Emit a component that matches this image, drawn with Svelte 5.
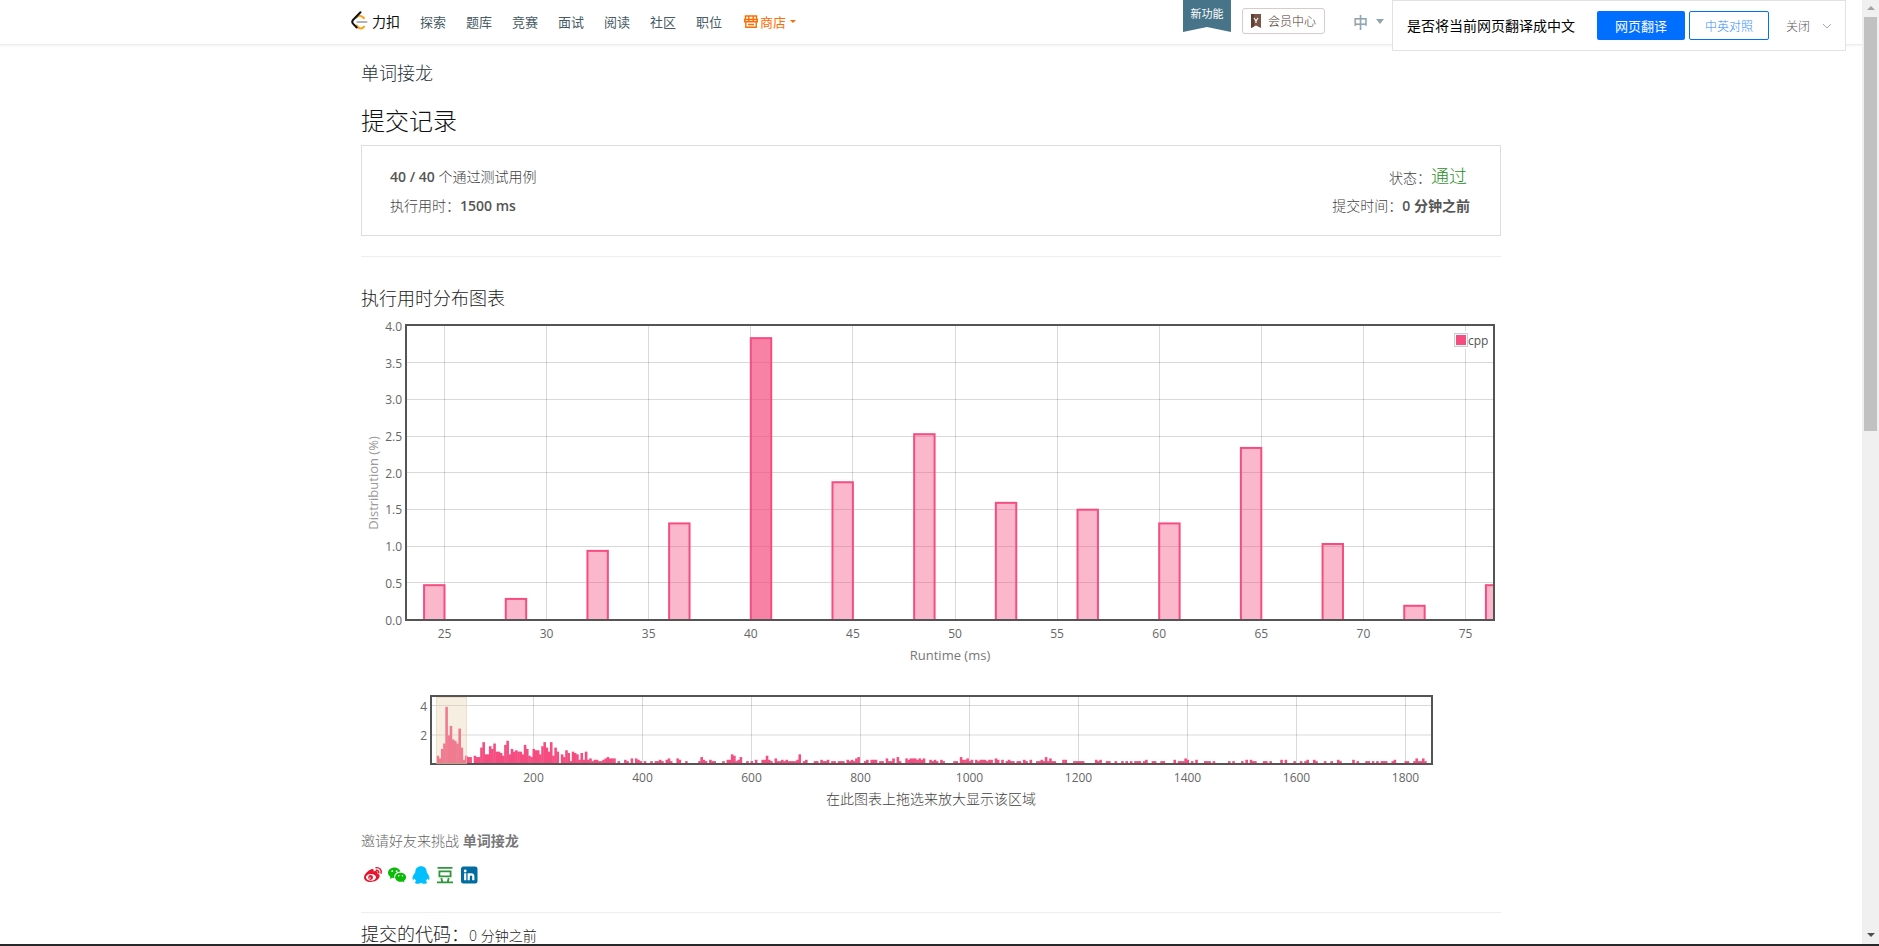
<script lang="ts">
	type Bar = {
		runtime: number;
		count: number;
	}

	// share of all submissions that one submission stands for, in percent
	const PERCENT = 0.0935;

	const navItems = ['探索', '题库', '竞赛', '面试', '阅读', '社区', '职位'];

	// one value per 4 ms bucket, starting at 24 ms
	const fast = [5, 3, 10, 14, 41, 20, 27, 17, 16, 14, 25, 11, 2, 5];

	// base 36 digit per 4 ms bucket, starting at 80 ms
	const slow =
		'440544bf66cae8875dg6a89886da54' +
		'a996cfb8f5b80649718762728231221123433301' + '0021030321' +
		'01001011210231003200100000142102110001022651240010' +
		'10200225210311212111126012000110211201101110212134' +
		'00120222011031130410032333232300212102100001104223' +
		'12021222122032020121101102102001121413110002200011' +
		'11100000212001100100101010111012001100110000201113' +
		'20102000111010000001010001020211000110100002020001' +
		'00101200210001001002100000201000110101011100120000' +
		'1100131131';

	const bars: Bar[] = [
		...fast.map((count, i) => ({ runtime: 24 + i * 4, count })),
		...[...slow].map((c, i) => ({ runtime: 80 + i * 4, count: parseInt(c, 36) }))
	].filter(bar => bar.count > 0);

	const mainBars = bars.slice(0, fast.length);
	const ownRuntime = 40;

	const mainXTicks = [25, 30, 35, 40, 45, 50, 55, 60, 65, 70, 75];
	const mainYTicks = [0, 0.5, 1, 1.5, 2, 2.5, 3, 3.5, 4];
	const miniXTicks = [200, 400, 600, 800, 1000, 1200, 1400, 1600, 1800];
	const miniYTicks = [2, 4];

	const mainX = (v: number) => 83.5 + (v - 25) * 20.42;
	const mainY = (v: number) => 309.5 - v * 73.4;
	const miniX = (v: number) => 172.5 + (v - 200) * 0.545;
	const miniY = (v: number) => 79.5 - v * 14.5;
</script>

<div class="window">
	<div class="page">
		<header>
			<div class="header-inner">
				<a class="logo" href="#home">
					<svg width="17" height="20" viewBox="0 0 17 20" fill="none" stroke-linecap="round" stroke-width="2">
						<path d="M5.500 14.500l2 2c1.300 1.300 3.400 1.300 4.700 0l.8-.8" stroke="#ffa116" />
						<path d="M5.500 6.500c2-2 4.600-1.800 6-.6l1.500 1.200" stroke="#ffa116" />
						<path d="M6.500 11h9" stroke="#b3b3b3" />
						<path d="M9.500 1.200L2.200 8.700c-1.100 1.200-1.100 3 0 4.200l3.500 3.600" stroke="#111" />
					</svg>
					<span>力扣</span>
				</a>
				<nav>
					{#each navItems as item}
						<a href="#{item}">{item}</a>
					{/each}
					<a class="store" href="#store">
						<svg width="14" height="13" viewBox="0 0 14 13" fill="none" stroke="#ff6d00" stroke-width="1.400">
							<path d="M1.500 1h11v3.500h-11zM.7 4.500h12.600v2.200H.7zM4.800 1v5M9.200 1v5M1.800 7v5.200h10.400V7M4 9.500h6" />
						</svg>
						<span>商店</span>
						<i class="caret"></i>
					</a>
				</nav>
				<div class="header-right">
					<span class="ribbon">新功能</span>
					<button class="member">
						<svg width="10" height="14" viewBox="0 0 10 14">
							<path d="M0 0h10v14L5 11.500 0 14z" fill="#795548" />
							<path d="M0 0h3v12.500L0 14z" fill="#5d4037" />
							<path d="M3 4l2 3 2-3M5 7v2" fill="none" stroke="#fff" stroke-width="1.200" />
						</svg>
						会员中心
					</button>
					<button class="lang">中<i class="caret"></i></button>
				</div>
			</div>
		</header>

		<div class="translate">
			<span class="question">是否将当前网页翻译成中文</span>
			<button class="primary">网页翻译</button>
			<button class="outline">中英对照</button>
			<button class="close">
				关闭
				<svg width="10" height="6" viewBox="0 0 10 6" fill="none" stroke="#aaa"><path d="M1 1l4 4 4-4" /></svg>
			</button>
		</div>

		<main>
			<a class="problem" href="#problem">单词接龙</a>
			<h1>提交记录</h1>

			<section class="summary">
				<div>
					<p><b>40 / 40</b> 个通过测试用例</p>
					<p>执行用时：<b>1500 ms</b></p>
				</div>
				<div class="right">
					<p class="status">状态：<span>通过</span></p>
					<p>提交时间：<b>0 分钟之前</b></p>
				</div>
			</section>

			<hr />

			<h2>执行用时分布图表</h2>

			<svg class="chart" viewBox="0 0 1140 354">
				<clipPath id="main-area"><rect x="45" y="15" width="1088" height="295" /></clipPath>
				<g class="grid">
					{#each mainXTicks as tick}
						<line x1={Math.floor(mainX(tick)) + 0.5} x2={Math.floor(mainX(tick)) + 0.5} y1="15" y2="310" />
					{/each}
					{#each mainYTicks as tick}
						<line x1="45" x2="1133" y1={Math.floor(mainY(tick)) + 0.5} y2={Math.floor(mainY(tick)) + 0.5} />
					{/each}
				</g>
				<g clip-path="url(#main-area)">
					{#each mainBars as bar}
						<rect
							class="bar"
							class:own={bar.runtime === ownRuntime}
							x={mainX(bar.runtime)}
							y={mainY(bar.count * PERCENT)}
							width="20.42"
							height={bar.count * PERCENT * 73.4 + 4}
						/>
					{/each}
				</g>
				<rect class="frame" x="45" y="15" width="1088" height="295" />
				<g class="ticks">
					{#each mainXTicks as tick}
						<text x={mainX(tick)} y="328" text-anchor="middle">{tick}</text>
					{/each}
					{#each mainYTicks as tick}
						<text x="41" y={mainY(tick) + 5} text-anchor="end">{tick.toFixed(1)}</text>
					{/each}
				</g>
				<rect x="1091" y="21" width="38" height="18" fill="#fff" />
				<rect x="1093.500" y="23.500" width="13" height="13" fill="#fff" stroke="#ccc" />
				<rect x="1095" y="25" width="10" height="10" fill="#f54d80" />
				<text class="legend" x="1107" y="35">cpp</text>
				<text class="axis" x="589" y="350" text-anchor="middle">Runtime (ms)</text>
				<text class="axis faint" transform="translate(17 173) rotate(-90)" text-anchor="middle">Distribution (%)</text>
			</svg>

			<svg class="chart overview" viewBox="0 0 1140 105">
				<clipPath id="mini-area"><rect x="70" y="12" width="1001" height="68" /></clipPath>
				<g class="grid">
					{#each miniXTicks as tick}
						<line x1={miniX(tick)} x2={miniX(tick)} y1="12" y2="80" />
					{/each}
					{#each miniYTicks as tick}
						<line x1="70" x2="1071" y1={miniY(tick) + 1 - tick / 4} y2={miniY(tick) + 1 - tick / 4} />
					{/each}
				</g>
				<g clip-path="url(#mini-area)" fill="#f54d80">
					{#each bars as bar}
						<rect
							x={miniX(bar.runtime) - 1}
							y={miniY(bar.count * PERCENT) - 1}
							width="2.600"
							height={bar.count * PERCENT * 14.5 + 2}
						/>
					{/each}
				</g>
				<rect class="frame" x="70" y="12" width="1001" height="68" />
				<rect class="selection" x="75.500" y="13.500" width="30" height="66" />
				<g class="ticks">
					{#each miniXTicks as tick}
						<text x={miniX(tick)} y="98" text-anchor="middle">{tick}</text>
					{/each}
					{#each miniYTicks as tick}
						<text x="66" y={miniY(tick) + 5} text-anchor="end">{tick}</text>
					{/each}
				</g>
			</svg>
			<p class="hint">在此图表上拖选来放大显示该区域</p>

			<p class="invite">邀请好友来挑战 <b>单词接龙</b></p>
			<div class="share">
				<a href="#weibo" aria-label="微博">
					<svg width="20" height="18" viewBox="0 0 20 18">
						<path d="M8.300 3.200c1.500-.5 3 0 2.300 2.300 2.800-1 4.600-.3 3.900 2 2 .7 2.700 2 1.900 3.800-1.300 3-5 4.600-8.800 4.600C3.800 15.900 1 14 1 11.400c0-3 4.300-7.300 7.300-8.200z" fill="#e6162d" />
						<ellipse cx="8" cy="11.300" rx="5" ry="3.400" fill="#fff" />
						<circle cx="7.600" cy="11.500" r="2.400" fill="#e6162d" />
						<circle cx="7" cy="12" r=".8" fill="#fff" />
						<path d="M13 1.700c3.400-.6 6 2.200 5 5.500M13.300 4.300c1.700-.2 2.800 1 2.400 2.600" fill="none" stroke="#e6162d" stroke-width="1.400" stroke-linecap="round" />
					</svg>
				</a>
				<a href="#wechat" aria-label="微信">
					<svg width="20" height="18" viewBox="0 0 20 18" fill="#09bb07">
						<path d="M7.500 1.500C3.900 1.500 1 3.900 1 6.800c0 1.700.9 3.100 2.400 4.100L2.800 13l2.500-1.300c.7.2 1.500.3 2.200.3-1-3.500 2-6.500 6-6.400-.6-2.400-3.100-4.100-6-4.100z" />
						<path d="M13.600 6.700c-3.100 0-5.500 2-5.500 4.500s2.400 4.500 5.500 4.500c.7 0 1.300-.1 1.900-.3l2 1.100-.5-1.800c1.300-.8 2.100-2.100 2.100-3.500 0-2.500-2.400-4.500-5.500-4.500z" />
						<g fill="#fff"><circle cx="5.300" cy="5.200" r=".9" /><circle cx="9.600" cy="5.200" r=".9" /><circle cx="11.800" cy="9.800" r=".8" /><circle cx="15.400" cy="9.800" r=".8" /></g>
					</svg>
				</a>
				<a href="#qq" aria-label="QQ">
					<svg width="20" height="18" viewBox="0 0 20 18" fill="#00bfff">
						<path d="M10 .2c-3.700 0-5.800 2.400-5.700 6.100C3 7.900 1.300 10.600 1.500 13c.1 1.300 1.200.8 2.200-.6.300 1 .8 1.900 1.500 2.600-2 .9-1.300 2.800 1.200 2.800 1.500 0 2.900-.4 3.600-1.100.7.700 2.100 1.100 3.600 1.100 2.500 0 3.200-1.900 1.200-2.800.7-.7 1.200-1.600 1.500-2.600 1 1.400 2.100 1.900 2.200.6.200-2.400-1.500-5.100-2.800-6.700C15.800 2.600 13.700.2 10 .2z" />
					</svg>
				</a>
				<a href="#douban" aria-label="豆瓣">
					<svg width="20" height="18" viewBox="0 0 20 18" fill="none" stroke="#2e963d" stroke-width="1.800">
						<path d="M2.500 1.900h15M2 16.300h16M4.400 5.400h11.200v5H4.400zM6.300 12l1 4M13.700 12l-1 4" />
					</svg>
				</a>
				<a href="#linkedin" aria-label="LinkedIn">
					<svg width="20" height="18" viewBox="0 0 20 18">
						<rect x="2" y=".5" width="16.500" height="17" rx="2.500" fill="#006c9f" />
						<circle cx="6.200" cy="5" r="1.400" fill="#fff" />
						<path d="M6.200 7.300v7M9.700 14.300v-7M9.700 10.300c.4-2.600 4.600-2.800 4.600.3v3.700" fill="none" stroke="#fff" stroke-width="2.200" />
					</svg>
				</a>
			</div>

			<hr />

			<h2 class="code">提交的代码：<small>0 分钟之前</small></h2>
		</main>
	</div>

	<div class="scrollbar">
		<i class="arrow up"></i>
		<div class="track"><div class="thumb"></div></div>
		<i class="arrow down"></i>
	</div>
</div>

<style>
	:global(body) {
		background: #fff;
		font-family: "Open Sans", "Noto Sans CJK SC", sans-serif;
		font-size: 14px;
		font-weight: 300;
		color: #424242;
	}

	.window {
		display: flex;
		box-sizing: border-box;
		height: 100vh;
		overflow: hidden;
		border-bottom: 2px solid #28282a;
	}

	.page {
		position: relative;
		flex: 1;
		min-width: 0;
		overflow: hidden;
	}

	a {
		color: inherit;
		text-decoration: none;
	}

	button {
		padding: 0;
		border: none;
		background: none;
		font: inherit;
		cursor: pointer;
	}

	b {
		color: #555;
		font-weight: 600;
	}

	p {
		margin: 0;
	}

	header {
		height: 44px;
		border-bottom: 1px solid #eee;
		box-shadow: 0 1px 2px rgba(0, 0, 0, 0.06);
	}

	.header-inner {
		display: flex;
		align-items: center;
		box-sizing: border-box;
		max-width: 1160px;
		height: 42px;
		margin: 0 auto;
		padding-right: 127px;
	}

	.logo {
		display: flex;
		align-items: center;
		gap: 4px;
		margin-right: 20px;
		font-weight: 400;
		color: #111;
	}

	nav {
		display: flex;
		gap: 20px;
		font-size: 13px;
		font-weight: 400;
		color: #455a64;
	}

	.store {
		display: flex;
		align-items: center;
		gap: 2px;
		margin-left: 2px;
		color: #ff6d00;
	}

	.caret {
		border: 3px solid transparent;
		border-top-color: currentColor;
		border-bottom: none;
	}

	.store .caret {
		margin-left: 2px;
	}

	.header-right {
		display: flex;
		align-items: center;
		margin-left: auto;
		height: 42px;
	}

	.ribbon {
		align-self: flex-start;
		width: 48px;
		height: 32px;
		margin-right: 11px;
		background: #477488;
		clip-path: polygon(0 0, 100% 0, 100% 100%, 50% 84%, 0 100%);
		color: #fff;
		font-size: 11px;
		font-weight: 400;
		line-height: 28px;
		text-align: center;
	}

	.member {
		display: flex;
		align-items: center;
		gap: 7px;
		height: 26px;
		padding: 0 8px;
		border: 1px solid #d7ccc8;
		border-radius: 3px;
		color: #4e342e;
		font-size: 12px;
	}

	.lang {
		display: flex;
		align-items: center;
		gap: 8px;
		margin-left: 28px;
		color: #90a4ae;
		font-size: 15px;
		font-weight: 500;
	}

	.lang .caret {
		border-width: 5px 4px 0;
	}

	.translate {
		position: absolute;
		top: 0;
		right: 16px;
		display: flex;
		align-items: center;
		box-sizing: border-box;
		height: 51px;
		padding: 0 13px 0 14px;
		border: 1px solid #e2e2e2;
		background: #fff;
	}

	.question {
		margin-right: 22px;
		padding-bottom: 2px;
		color: #000;
		font-weight: 400;
	}

	.primary {
		width: 88px;
		height: 29px;
		margin-right: 4px;
		border-radius: 2px;
		background: #006eff;
		color: #fff;
		font-size: 13px;
		font-weight: 400;
	}

	.outline {
		width: 80px;
		height: 29px;
		border: 1px solid #006eff;
		border-radius: 2px;
		color: #2f8cff;
		font-size: 12px;
	}

	.close {
		display: flex;
		align-items: center;
		gap: 12px;
		margin-left: 17px;
		color: #555;
		font-size: 12px;
	}

	main {
		max-width: 1140px;
		margin: 0 auto;
		padding-top: 16px;
	}

	.problem {
		display: block;
		color: #263238;
		font-size: 18px;
		line-height: 24px;
	}

	h1 {
		margin: 20px 0 8px;
		color: #111;
		font-size: 24px;
		font-weight: 300;
		line-height: 32px;
	}

	h2 {
		margin: 29px 0 0;
		color: #222;
		font-size: 18px;
		font-weight: 300;
		line-height: 24px;
	}

	hr {
		height: 1px;
		margin: 20px 0 0;
		border: none;
		background: #eee;
	}

	.summary {
		display: flex;
		justify-content: space-between;
		padding: 16px 30px 15px 28px;
		border: 1px solid #ddd;
		line-height: 29px;
	}

	.summary p {
		height: 29px;
	}

	.right {
		text-align: right;
	}

	.status {
		padding-right: 3px;
	}

	.status span {
		color: #1f8f24;
		font-size: 18px;
	}

	.chart {
		display: block;
		width: 100%;
		height: auto;
	}

	.overview {
		margin-top: 20px;
	}

	.grid line {
		stroke: #545454;
		stroke-opacity: 0.22;
	}

	.frame {
		fill: none;
		stroke: #545454;
		stroke-width: 2;
	}

	.bar {
		fill: #f54d80;
		fill-opacity: 0.4;
		stroke: #f54d80;
		stroke-width: 2;
	}

	.bar.own {
		fill-opacity: 0.7;
	}

	.selection {
		fill: #e8cfac;
		fill-opacity: 0.35;
		stroke: #e8cfac;
		stroke-opacity: 0.6;
	}

	.ticks text {
		fill: #666;
		font-size: 12px;
		font-weight: 400;
	}

	.legend {
		fill: #545454;
		font-size: 12px;
		font-weight: 400;
	}

	.axis {
		fill: #777;
		font-size: 13px;
		font-weight: 400;
	}

	.faint {
		fill: #999;
	}

	.hint {
		line-height: 20px;
		text-align: center;
	}

	.invite {
		margin-top: 22px;
		color: #666;
		line-height: 20px;
	}

	.invite b {
		color: #777;
	}

	.share {
		display: flex;
		align-items: center;
		gap: 4px;
		height: 20px;
		margin: 14px 0 27px;
		padding-left: 2px;
	}

	.share svg {
		display: block;
	}

	.share + hr {
		margin: 0;
	}

	.code {
		margin-top: 9px;
	}

	.code small {
		font-size: 14px;
	}

	.scrollbar {
		display: flex;
		flex-direction: column;
		align-items: center;
		width: 17px;
		background: #f0f0f0;
	}

	.track {
		flex: 1;
		width: 13px;
	}

	.thumb {
		height: 45.5%;
		background: #c1c1c1;
	}

	.arrow {
		margin: 6px 0 7px;
		border: 4px solid transparent;
	}

	.up {
		border-top: none;
		border-bottom-color: #a3a3a3;
	}

	.down {
		border-bottom: none;
		border-top-color: #505050;
	}
</style>
